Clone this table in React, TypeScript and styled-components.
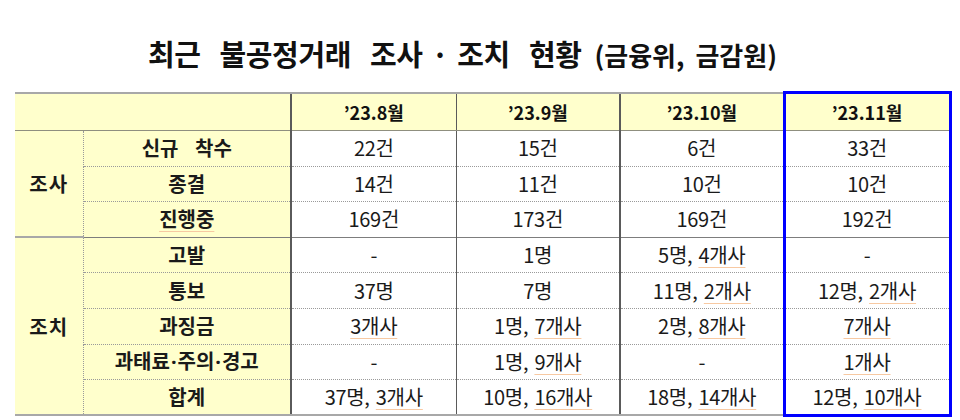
import styled, { createGlobalStyle, css } from "styled-components";

const GlobalStyle = createGlobalStyle`
  html, body {
    margin: 0;
    padding: 0;
    background: #ffffff;
  }
  body {
    font-family: "Noto Sans CJK KR", "Noto Sans", sans-serif;
    color: #1a1a1a;
  }
`;

const COLORS = {
  yellow: "#ffffcc",
  blue: "#0000ff",
  grid: "#9a9a9a",
  dark: "#5a5a5a",
  squiggle: "#f7c9a2",
};

type Group = {
  label: string;
  rows: string[][];
};

const MONTHS = ["’23.8월", "’23.9월", "’23.10월", "’23.11월"];

const GROUPS: Group[] = [
  {
    label: "조사",
    rows: [
      ["신규 착수", "22건", "15건", "6건", "33건"],
      ["종결", "14건", "11건", "10건", "10건"],
      ["진행중", "169건", "173건", "169건", "192건"],
    ],
  },
  {
    label: "조치",
    rows: [
      ["고발", "-", "1명", "5명, 4개사", "-"],
      ["통보", "37명", "7명", "11명, 2개사", "12명, 2개사"],
      ["과징금", "3개사", "1명, 7개사", "2명, 8개사", "7개사"],
      ["과태료·주의·경고", "-", "1명, 9개사", "-", "1개사"],
      ["합계", "37명, 3개사", "10명, 16개사", "18명, 14개사", "12명, 10개사"],
    ],
  },
];

// words the spell checker flagged in the source document
const FLAGGED = /(\d+개사|진행중|·)/;

function Marked({ text }: { text: string }) {
  const parts = text.split(FLAGGED);
  return (
    <>
      {parts.map((p, i) => {
        if (p === "·") return <NarrowDot key={i}>·</NarrowDot>;
        if (FLAGGED.test(p)) return <Squiggle key={i}>{p}</Squiggle>;
        return <span key={i}>{p}</span>;
      })}
    </>
  );
}

export default function App() {
  return (
    <Page>
      <GlobalStyle />
      <Title>
        <span>최근</span>
        <span>불공정거래</span>
        <span>
          조사<TitleDot>·</TitleDot>조치
        </span>
        <span>현황</span>
        <Sub>(금융위, 금감원)</Sub>
      </Title>
      <Table>
        <colgroup>
          <col style={{ width: 68 }} />
          <col style={{ width: 208 }} />
          <col style={{ width: 165 }} />
          <col style={{ width: 164 }} />
          <col style={{ width: 164 }} />
          <col style={{ width: 166 }} />
        </colgroup>
        <thead>
          <tr>
            <HeadCell colSpan={2} />
            {MONTHS.map((m, i) => (
              <HeadCell key={m} $col={i} $highlight={i === MONTHS.length - 1}>
                {m}
              </HeadCell>
            ))}
          </tr>
        </thead>
        <tbody>
          {GROUPS.map((g, gi) =>
            g.rows.map((row, ri) => {
              const groupStart = ri === 0 && gi > 0;
              const isLastRow = gi === GROUPS.length - 1 && ri === g.rows.length - 1;
              return (
                <Row key={`${gi}-${ri}`}>
                  {ri === 0 && (
                    <GroupCell rowSpan={g.rows.length} $groupStart={groupStart}>
                      {g.label}
                    </GroupCell>
                  )}
                  <LabelCell $groupStart={groupStart} $first={ri === 0} $last={isLastRow}>
                    <Marked text={row[0]} />
                  </LabelCell>
                  {row.slice(1).map((v, ci) => (
                    <DataCell
                      key={ci}
                      $col={ci}
                      $groupStart={groupStart}
                      $first={ri === 0}
                      $last={isLastRow}
                      $highlight={ci === 3}
                    >
                      <Marked text={v} />
                    </DataCell>
                  ))}
                </Row>
              );
            })
          )}
        </tbody>
      </Table>
    </Page>
  );
}

const Page = styled.div`
  width: 960px;
  height: 420px;
  box-sizing: border-box;
  padding: 29px 10px 0 15px;
  overflow: hidden;
`;

const Title = styled.h1`
  margin: 0 0 0 133px;
  height: 48px;
  display: flex;
  align-items: baseline;
  gap: 19px;
  font-size: 29px;
  line-height: 48px;
  font-weight: 700;
  color: #111111;
  letter-spacing: -0.4px;
`;

const TitleDot = styled.span`
  margin: 0 9px;
`;

const Sub = styled.span`
  font-size: 26px;
  font-weight: 700;
  letter-spacing: 0;
  word-spacing: 5px;
  margin-left: -6px;
`;

const Table = styled.table`
  margin-top: 14px;
  width: 935px;
  table-layout: fixed;
  border-collapse: collapse;
  text-align: center;
`;

const Row = styled.tr`
  height: 35.6px;
`;

const verticalRule = (col: number) => css`
  border-left: ${col === 1 ? "1px" : "2px"} solid ${COLORS.dark};
`;

const blueSides = css`
  border-left: 3px solid ${COLORS.blue};
  border-right: 3px solid ${COLORS.blue};
`;

type CellProps = {
  $col?: number;
  $highlight?: boolean;
  $groupStart?: boolean;
  $first?: boolean;
  $last?: boolean;
};

const HeadCell = styled.th<CellProps>`
  height: 36px;
  padding: 0;
  background: ${COLORS.yellow};
  border-top: 2px solid #a8a8a8;
  border-bottom: 1px solid #8f8f7f;
  font-size: 18px;
  font-weight: 700;
  line-height: 1;
  color: #111111;
  ${({ $col }) => $col !== undefined && verticalRule($col)}
  ${({ $highlight }) =>
    $highlight &&
    css`
      ${blueSides};
      border-top: 3px solid ${COLORS.blue};
    `}
`;

const rowBorders = css<CellProps>`
  border-top: ${({ $groupStart, $first }) =>
    $groupStart
      ? `1px solid #7d7d7d`
      : $first
        ? "none"
        : `1px dotted ${COLORS.grid}`};
  border-bottom: ${({ $last }) => ($last ? "2px solid #a8a8a8" : "none")};
`;

const GroupCell = styled.td<CellProps>`
  padding: 0;
  background: ${COLORS.yellow};
  border-right: 1px dotted ${COLORS.grid};
  border-top: ${({ $groupStart }) => ($groupStart ? "1px solid #7d7d7d" : "none")};
  border-bottom: 2px solid #a8a8a8;
  font-size: 20px;
  font-weight: 700;
  letter-spacing: 1px;
`;

const LabelCell = styled.td<CellProps>`
  padding: 0;
  background: ${COLORS.yellow};
  font-size: 20px;
  font-weight: 700;
  line-height: 1;
  word-spacing: 12px;
  white-space: nowrap;
  ${rowBorders}
`;

const DataCell = styled.td<CellProps>`
  padding: 0;
  background: #ffffff;
  font-size: 20px;
  font-weight: 400;
  line-height: 1;
  white-space: nowrap;
  word-spacing: 2px;
  letter-spacing: -0.3px;
  ${rowBorders}
  ${({ $col }) => $col !== undefined && verticalRule($col)}
  ${({ $highlight, $last }) =>
    $highlight &&
    css`
      ${blueSides};
      ${$last && `border-bottom: 3px solid ${COLORS.blue};`}
    `}
`;

const Squiggle = styled.span`
  text-decoration: underline;
  text-decoration-color: ${COLORS.squiggle};
  text-decoration-thickness: 1px;
  text-underline-offset: 4px;
  word-spacing: normal;
`;

const NarrowDot = styled.span`
  font-family: "Noto Sans", "DejaVu Sans", sans-serif;
  margin: 0 1px;
`;
